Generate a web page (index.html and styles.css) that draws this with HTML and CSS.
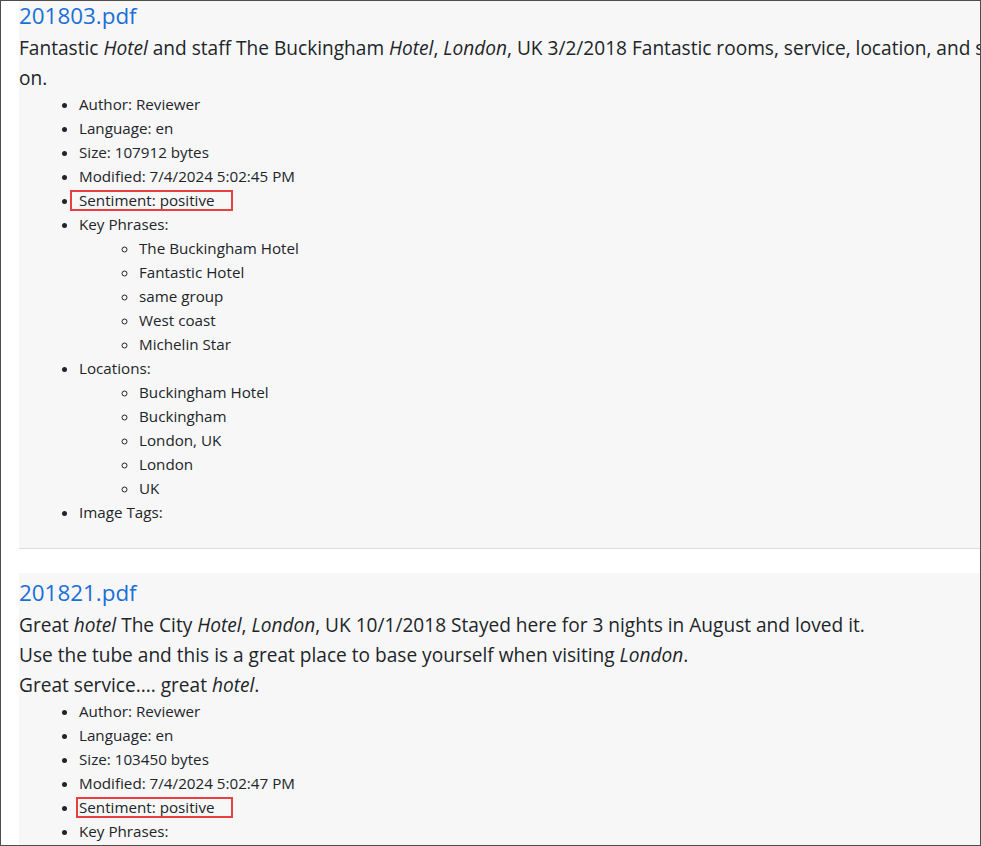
FILE: index.html
```html
<!DOCTYPE html>
<html lang="en">
<head>
<meta charset="utf-8">
<title>Search results</title>
<link rel="stylesheet" href="styles.css">
</head>
<body>
<div class="frame">
  <div class="results">
    <section class="doc doc-first">
      <h3 class="doc-title"><a href="#">201803.pdf</a></h3>
      <p class="doc-text"><span class="line">Fantastic <em>Hotel</em> and staff The Buckingham <em>Hotel</em>, <em>London</em>, UK 3/2/2018 Fantastic rooms, service, location, and staff. Would definitely stay here again and recommend to</span><br>on.</p>
      <ul class="meta">
        <li>Author: Reviewer</li>
        <li>Language: en</li>
        <li>Size: 107912 bytes</li>
        <li>Modified: 7/4/2024 5:02:45 PM</li>
        <li class="mark">Sentiment: positive<span class="highlight h1"></span></li>
        <li>Key Phrases:
          <ul class="sub">
            <li>The Buckingham Hotel</li>
            <li>Fantastic Hotel</li>
            <li>same group</li>
            <li>West coast</li>
            <li>Michelin Star</li>
          </ul>
        </li>
        <li>Locations:
          <ul class="sub">
            <li>Buckingham Hotel</li>
            <li>Buckingham</li>
            <li>London, UK</li>
            <li>London</li>
            <li>UK</li>
          </ul>
        </li>
        <li>Image Tags:</li>
      </ul>
    </section>
    <hr class="sep">
    <section class="doc">
      <h3 class="doc-title"><a href="#">201821.pdf</a></h3>
      <p class="doc-text">Great <em>hotel</em> The City <em>Hotel</em>, <em>London</em>, UK 10/1/2018 Stayed here for 3 nights in August and loved it.<br>Use the tube and this is a great place to base yourself when visiting <em>London</em>.<br>Great service.... great <em>hotel</em>.</p>
      <ul class="meta">
        <li>Author: Reviewer</li>
        <li>Language: en</li>
        <li>Size: 103450 bytes</li>
        <li>Modified: 7/4/2024 5:02:47 PM</li>
        <li class="mark">Sentiment: positive<span class="highlight h2"></span></li>
        <li>Key Phrases:
          <ul class="sub">
            <li>The City Hotel</li>
            <li>great place</li>
            <li>Great service</li>
          </ul>
        </li>
      </ul>
    </section>
  </div>
</div>
</body>
</html>
```

FILE: styles.css
```css
html, body {
  margin: 0;
  padding: 0;
  background: #ffffff;
}

body {
  font-family: "Open Sans", "Noto Sans", sans-serif;
  color: #212529;
}

.frame {
  width: 981px;
  height: 846px;
  box-sizing: border-box;
  border: 1px solid #4d4d4d;
  overflow: hidden;
  background: #ffffff;
}

.results {
  margin-top: -5px;
  padding-left: 18px;
}

.doc {
  background: #f7f7f7;
  padding: 3px 0 24px 0;
  width: 1200px;
}

.doc-title {
  margin: 0;
  font-size: 22.4px;
  font-weight: 400;
  line-height: 34px;
}

.doc-title a {
  color: #1a6fd8;
  text-decoration: none;
}

.doc-text {
  margin: 0;
  font-size: 19.1px;
  line-height: 30px;
}

.doc-text .line {
  white-space: nowrap;
}

.meta {
  margin: -1px 0 0 0;
  padding-left: 60px;
  font-size: 15.2px;
  line-height: 24px;
  list-style: disc;
}

.meta .sub {
  margin: 0;
  padding-left: 60px;
  list-style: circle;
}

.mark {
  position: relative;
}

.highlight {
  position: absolute;
  top: 2px;
  height: 21px;
  box-sizing: border-box;
  border: 2px solid #e8403f;
  pointer-events: none;
}

.h1 {
  left: -9px;
  width: 163px;
}

.h2 {
  left: -3px;
  width: 157px;
}

.sep {
  margin: 0 0 24px 0;
  border: 0;
  border-top: 1px solid #dcdcdc;
  height: 0;
}
```
